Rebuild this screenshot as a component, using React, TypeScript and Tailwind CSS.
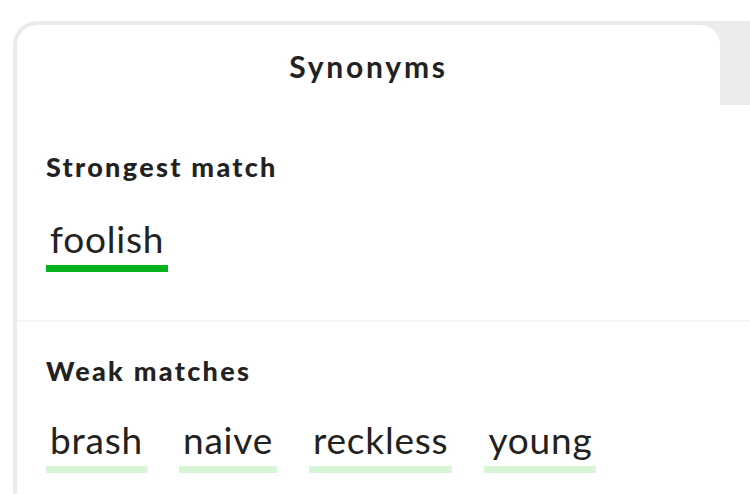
import React from 'react';

const weak = ['brash', 'naive', 'reckless', 'young'];

function Word({ text, strong }: { text: string; strong?: boolean }) {
	return (
		<div className="flex flex-col">
			<span className="px-[4px] text-[37px] leading-[40px] tracking-[0.8px] text-[#222] font-normal">{text}</span>
			<span className={`mt-[6px] h-[7px] ${strong ? 'bg-[#08b21f]' : 'bg-[#d8f5d8]'}`} />
		</div>
	);
}

export default function App() {
	return (
		<div
			className="w-[750px] h-[494px] overflow-hidden bg-white pt-[21px] pl-[13px]"
			style={{ fontFamily: 'Lato, "Open Sans", sans-serif' }}
		>
			<div className="h-full border-l-4 border-t-4 border-[#ebebed] rounded-tl-[24px] overflow-hidden flex flex-col bg-[#ececee]">
				<div className="flex h-[80px] shrink-0">
					<div className="w-[703px] bg-white rounded-t-[20px] flex items-center justify-center">
						<h2 className="text-[30px] leading-[40px] font-bold text-[#222] tracking-[2.8px] mt-[1px]">Synonyms</h2>
					</div>
					<div className="flex-1" />
				</div>
				<div className="flex-1 bg-white">
					<section className="h-[217px] pl-[29px] pt-[46px] border-b-2 border-[#f4f4f4]">
						<h3 className="text-[27px] leading-[32px] font-black tracking-[2.3px] text-[#222]">Strongest match</h3>
						<div className="mt-[36px] flex">
							<Word text="foolish" strong />
						</div>
					</section>
					<section className="pl-[29px] pt-[33px]">
						<h3 className="text-[27px] leading-[32px] font-black tracking-[2.3px] text-[#222]">Weak matches</h3>
						<div className="mt-[33px] flex gap-[32px]">
							{weak.map(w => (
								<Word key={w} text={w} />
							))}
						</div>
					</section>
				</div>
			</div>
		</div>
	);
}
